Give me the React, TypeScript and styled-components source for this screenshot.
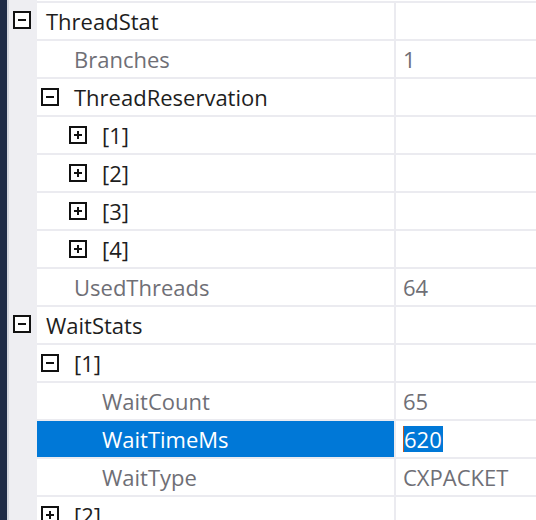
import styled, { createGlobalStyle } from 'styled-components'

type Prop = {
    name: string
    value?: string
    level: number
    /** undefined = leaf, true = expanded, false = collapsed */
    expanded?: boolean
    /** leaf names and values are greyed out (read only) */
    readOnly?: boolean
    selected?: boolean
}

const rows: Prop[] = [
    { name: 'ThreadStat', level: 0, expanded: true },
    { name: 'Branches', value: '1', level: 1, readOnly: true },
    { name: 'ThreadReservation', level: 1, expanded: true },
    { name: '[1]', level: 2, expanded: false },
    { name: '[2]', level: 2, expanded: false },
    { name: '[3]', level: 2, expanded: false },
    { name: '[4]', level: 2, expanded: false },
    { name: 'UsedThreads', value: '64', level: 1, readOnly: true },
    { name: 'WaitStats', level: 0, expanded: true },
    { name: '[1]', level: 1, expanded: true },
    { name: 'WaitCount', value: '65', level: 2, readOnly: true },
    { name: 'WaitTimeMs', value: '620', level: 2, readOnly: true, selected: true },
    { name: 'WaitType', value: 'CXPACKET', level: 2, readOnly: true },
    { name: '[2]', level: 1, expanded: false },
]

function ExpandBox({ open }: { open: boolean }) {
    return (
        <Box viewBox="0 0 18 18">
            <rect x="1" y="1" width="16" height="16" fill="#fff" stroke="#111" strokeWidth="2" />
            <rect x="5" y="8" width="8" height="2" fill="#111" />
            {!open && <rect x="8" y="5" width="2" height="8" fill="#111" />}
        </Box>
    )
}

export default function App() {
    return (
        <>
            <GlobalStyle />
            <Window>
                <Strip />
                <Grid>
                    <TopEdge />
                    {rows.map((r, i) => (
                        <Row key={i}>
                            <Gutter>
                                {r.level === 0 && r.expanded !== undefined && <ExpandBox open={r.expanded} />}
                            </Gutter>
                            <NameCell $selected={r.selected} $indent={Math.max(0, r.level - 1) * 28 + (r.level === 0 ? 9 : 4)}>
                                {r.level > 0 && (
                                    <IconSlot>
                                        {r.expanded !== undefined && <ExpandBox open={r.expanded} />}
                                    </IconSlot>
                                )}
                                <Name $readOnly={r.readOnly} $selected={r.selected}>{r.name}</Name>
                            </NameCell>
                            <ValueCell $readOnly={r.readOnly}>
                                {r.selected ? <Editing>{r.value}</Editing> : r.value}
                            </ValueCell>
                        </Row>
                    ))}
                </Grid>
            </Window>
        </>
    )
}

const GlobalStyle = createGlobalStyle`
  html, body {
    margin: 0;
    padding: 0;
    background: #fff;
    overflow: hidden;
  }
  body {
    font-family: "Open Sans", "Noto Sans", sans-serif;
  }
`

const Window = styled.div`
  display: flex;
  width: 536px;
  height: 520px;
  overflow: hidden;
  background: #fff;
`

const Strip = styled.div`
  width: 7px;
  flex-shrink: 0;
  background: #1f2c47;
  border-right: 2px solid #d4d7de;
`

const Grid = styled.div`
  flex: 1;
  display: flex;
  flex-direction: column;
  background: #eeeef2;
`

const TopEdge = styled.div`
  height: 1px;
  margin-left: 28px;
  background: #fff;
  flex-shrink: 0;
`

const Row = styled.div`
  display: grid;
  grid-template-columns: 28px 359px 1fr;
  height: 38px;
  flex-shrink: 0;
`

const Gutter = styled.div`
  display: flex;
  align-items: center;
  padding-left: 4px;
  background: #eeeef2;
`

const NameCell = styled.div<{ $selected?: boolean; $indent: number }>`
  display: flex;
  align-items: center;
  padding-left: ${p => p.$indent}px;
  border-top: 2px solid #ebebf0;
  border-right: 2px solid #ebebf0;
  background: ${p => (p.$selected ? '#0078d7' : '#fff')};
`

const IconSlot = styled.div`
  width: 33px;
  height: 18px;
  flex-shrink: 0;
  display: flex;
`

const Box = styled.svg`
  width: 18px;
  height: 18px;
  display: block;
`

const Name = styled.span<{ $readOnly?: boolean; $selected?: boolean }>`
  font-size: 22px;
  white-space: nowrap;
  color: ${p => (p.$selected ? '#fff' : p.$readOnly ? '#6f6f76' : '#1e1e1e')};
`

const ValueCell = styled.div<{ $readOnly?: boolean }>`
  display: flex;
  align-items: center;
  padding-left: 7px;
  border-top: 2px solid #ebebf0;
  background: #fff;
  font-size: 22px;
  white-space: nowrap;
  color: ${p => (p.$readOnly ? '#6f6f76' : '#1e1e1e')};
`

const Editing = styled.span`
  background: #0078d7;
  color: #fff;
  border-left: 1px solid #c8581e;
  line-height: 26px;
  padding-right: 1px;
`
